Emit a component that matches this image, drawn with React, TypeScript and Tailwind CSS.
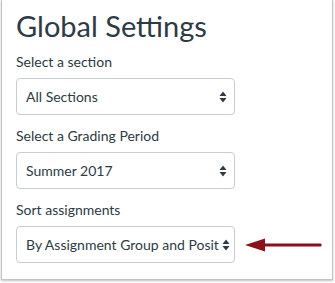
import { Fragment } from "react";

const fields = [
  { label: "Select a section", value: "All Sections" },
  { label: "Select a Grading Period", value: "Summer 2017" },
  { label: "Sort assignments", value: "By Assignment Group and Posit" },
];

function SortIcon() {
  return (
    <svg width="8" height="12" viewBox="0 0 8 12" className="shrink-0">
      <path d="M4 0.5 L7.5 5 H0.5 Z" fill="#2d3b45" />
      <path d="M4 11.5 L7.5 7 H0.5 Z" fill="#2d3b45" />
    </svg>
  );
}

function Arrow() {
  return (
    <svg width="78" height="14" viewBox="0 0 78 14" className="shrink-0">
      <path d="M0 7 L20 0.5 V13.5 Z" fill="#8c1019" />
      <path d="M16 5.6 H76 Q77.4 7 76 8.4 H16 Z" fill="#8c1019" />
    </svg>
  );
}

export default function App() {
  return (
    <div className="h-[283px] w-[335px] bg-white font-['Lato','Open_Sans',sans-serif] text-[#2d3b45]">
      <div className="ml-px h-[280px] w-[332px] border-x border-b border-[#c4c4c4] shadow-[0_1px_2px_rgba(0,0,0,0.25)]">
        <h1 className="pl-[14px] pt-[6px] text-[29px] leading-[40px]">Global Settings</h1>
        <div className="mt-[6px] flex flex-col pl-[14px]">
          {fields.map((f, i) => (
            <Fragment key={f.label}>
              <p className={`text-[14px] leading-[20px] ${i > 0 ? "mt-[11px]" : ""}`}>{f.label}</p>
              <div className="mt-[6px] flex items-center gap-[10px]">
                <div className="flex h-[37px] w-[219px] items-center gap-[3px] rounded-[4px] border border-[#c7cdd1] pl-[9px] pr-[7px]">
                  <span className="flex-1 whitespace-nowrap text-[14px] leading-[20px]">{f.value}</span>
                  <SortIcon />
                </div>
                {i === 2 && <Arrow />}
              </div>
            </Fragment>
          ))}
        </div>
      </div>
    </div>
  );
}
